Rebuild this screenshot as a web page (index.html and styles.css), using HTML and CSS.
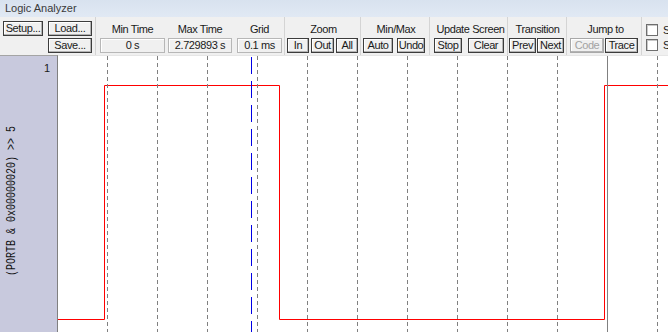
FILE: index.html
```html
<!DOCTYPE html>
<html>
<head>
<title>Logic Analyzer</title>
<meta charset="utf-8">
<link rel="stylesheet" href="styles.css">
</head>
<body>

<div class="titlebar">Logic Analyzer</div>

<div class="toolbar">
    <div class="grp g-file">
        <div class="ctl"><span class="btn w40">Setup...</span><span class="btn w44 ml5">Load...</span></div>
        <div class="ctl mt2"><span class="btn w44 ml45">Save...</span></div>
    </div>
    <div class="grp g-time">
        <div class="col w65"><div class="cap">Min Time</div><div class="val">0 s</div></div>
        <div class="col w64 ml3"><div class="cap">Max Time</div><div class="val">2.729893 s</div></div>
        <div class="col w45 ml5"><div class="cap">Grid</div><div class="val">0.1 ms</div></div>
    </div>
    <div class="grp g-zoom">
        <div class="cap">Zoom</div>
        <div class="ctl"><span class="btn w22">In</span><span class="btn w23 ml2">Out</span><span class="btn w22 ml2">All</span></div>
    </div>
    <div class="grp g-minmax">
        <div class="cap">Min/Max</div>
        <div class="ctl"><span class="btn w30">Auto</span><span class="btn w28 ml4">Undo</span></div>
    </div>
    <div class="grp g-update">
        <div class="cap">Update Screen</div>
        <div class="ctl"><span class="btn w28">Stop</span><span class="btn w36 ml6">Clear</span></div>
    </div>
    <div class="grp g-trans">
        <div class="cap">Transition</div>
        <div class="ctl"><span class="btn w27">Prev</span><span class="btn w27 ml1">Next</span></div>
    </div>
    <div class="grp g-jump">
        <div class="cap">Jump to</div>
        <div class="ctl"><span class="btn w34 off">Code</span><span class="btn w33 ml1">Trace</span></div>
    </div>
    <div class="grp g-opt">
        <div class="chk"><span class="box"></span>Show Cycles</div>
        <div class="chk"><span class="box"></span>Signal Info</div>
    </div>
</div>

<div class="main">
    <div class="chan">
        <div class="ch-num">1</div>
        <div class="ch-name"><span>(PORTB &amp; 0x00000020) &gt;&gt; 5</span></div>
    </div>
    <svg class="plot" width="610" height="277" viewBox="0 0 610 277">
        <line x1="0" y1="0.5" x2="610" y2="0.5" stroke="#e6e6e6"/>
        <!-- signal -->
        <polyline fill="none" stroke="#ff0000" points="0,264.5 46.5,264.5 46.5,30.5 221.5,30.5 221.5,264.5 546.5,264.5 546.5,30.5 610,30.5"/>
        <!-- grid -->
        <g stroke="#808080" stroke-dasharray="4 3">
            <line x1="49.5" y1="1" x2="49.5" y2="277"/>
            <line x1="99.5" y1="1" x2="99.5" y2="277"/>
            <line x1="149.5" y1="1" x2="149.5" y2="277"/>
            <line x1="199.5" y1="1" x2="199.5" y2="277"/>
            <line x1="249.5" y1="1" x2="249.5" y2="277"/>
            <line x1="299.5" y1="1" x2="299.5" y2="277"/>
            <line x1="349.5" y1="1" x2="349.5" y2="277"/>
            <line x1="399.5" y1="1" x2="399.5" y2="277"/>
            <line x1="449.5" y1="1" x2="449.5" y2="277"/>
            <line x1="499.5" y1="1" x2="499.5" y2="277"/>
            <line x1="599.5" y1="1" x2="599.5" y2="277"/>
        </g>
        <!-- cursors -->
        <line x1="549.5" y1="1" x2="549.5" y2="277" stroke="#808080"/>
        <line x1="193.5" y1="1" x2="193.5" y2="277" stroke="#0000e6" stroke-dasharray="17 7" stroke-dashoffset="-1"/>
    </svg>
</div>

</body>
</html>
```

FILE: styles.css
```css
*{margin:0;padding:0;box-sizing:border-box;}
body{width:668px;height:332px;overflow:hidden;background:#f0f0f0;font-family:"Liberation Sans",Arial,sans-serif;font-size:11px;color:#1a1a1a;}

.titlebar{height:17px;line-height:17px;padding-left:5px;background:linear-gradient(#d8e2ef,#e1e9f4);color:#3a3a3a;}

.toolbar{display:flex;height:38px;background:#f0f0f0;letter-spacing:-0.4px;white-space:nowrap;}
.grp{display:flex;flex-direction:column;padding-top:4px;border-right:1px solid #d4d4d4;flex:none;}
.g-file{width:96px;padding-left:3px;}
.g-time{width:189px;padding-left:4px;flex-direction:row;}
.g-zoom{width:76px;padding-left:2px;}
.g-minmax{width:69px;padding-left:2px;}
.g-update{width:78px;padding-left:4px;}
.g-trans{width:59px;padding-left:1px;}
.g-jump{width:75px;padding-left:3px;}
.g-opt{flex:1;min-width:0;overflow:hidden;border-right:none;padding:7px 0 0 4px;gap:3px;}

.col{display:flex;flex-direction:column;}
.cap{height:17px;line-height:17px;text-align:center;}
.ctl{display:flex;height:15px;}
.mt2{margin-top:2px;}

.btn{display:block;height:15px;line-height:13px;text-align:center;border:1px solid #3c3c3c;background:#f0f0f0;box-shadow:inset -1px -1px #b4b4b4,inset 1px 1px #fff;}
.btn.off{color:#a3a3a3;border-color:#a8a8a8;}
.val{height:15px;line-height:13px;text-align:center;border:1px solid #b7b7b7;background:#f0f0f0;box-shadow:inset 1px 1px #fff;}

.chk{display:flex;align-items:center;gap:5px;height:12px;}
.box{width:12px;height:12px;border:1px solid #6e6e6e;background:#fff;box-shadow:inset 1px 1px #c8c8c8;flex:none;}

.w22{width:22px;}.w23{width:23px;}.w27{width:27px;}.w28{width:28px;}.w30{width:30px;}
.w33{width:33px;}.w34{width:34px;}.w36{width:36px;}.w40{width:40px;}.w44{width:44px;}
.w45{width:45px;}.w64{width:64px;}.w65{width:65px;}
.ml1{margin-left:1px;}.ml2{margin-left:2px;}.ml3{margin-left:3px;}.ml4{margin-left:4px;}
.ml5{margin-left:5px;}.ml6{margin-left:6px;}.ml45{margin-left:45px;}

.main{display:flex;height:277px;background:#fff;}
.chan{width:58px;flex:none;display:flex;flex-direction:column;background:#c8c9dd;border-right:1px solid #808080;border-top:1px solid #a4a4a4;}
.ch-num{height:15px;padding:6px 7px 0 0;text-align:right;line-height:12px;}
.ch-name{flex:1;display:flex;align-items:center;padding-left:6px;}
.ch-name span{writing-mode:vertical-rl;transform:rotate(180deg) scaleX(1.3);font-family:"Liberation Mono","Courier New",monospace;font-size:10px;line-height:12px;color:#111;white-space:nowrap;}
.plot{display:block;flex:none;}
```
